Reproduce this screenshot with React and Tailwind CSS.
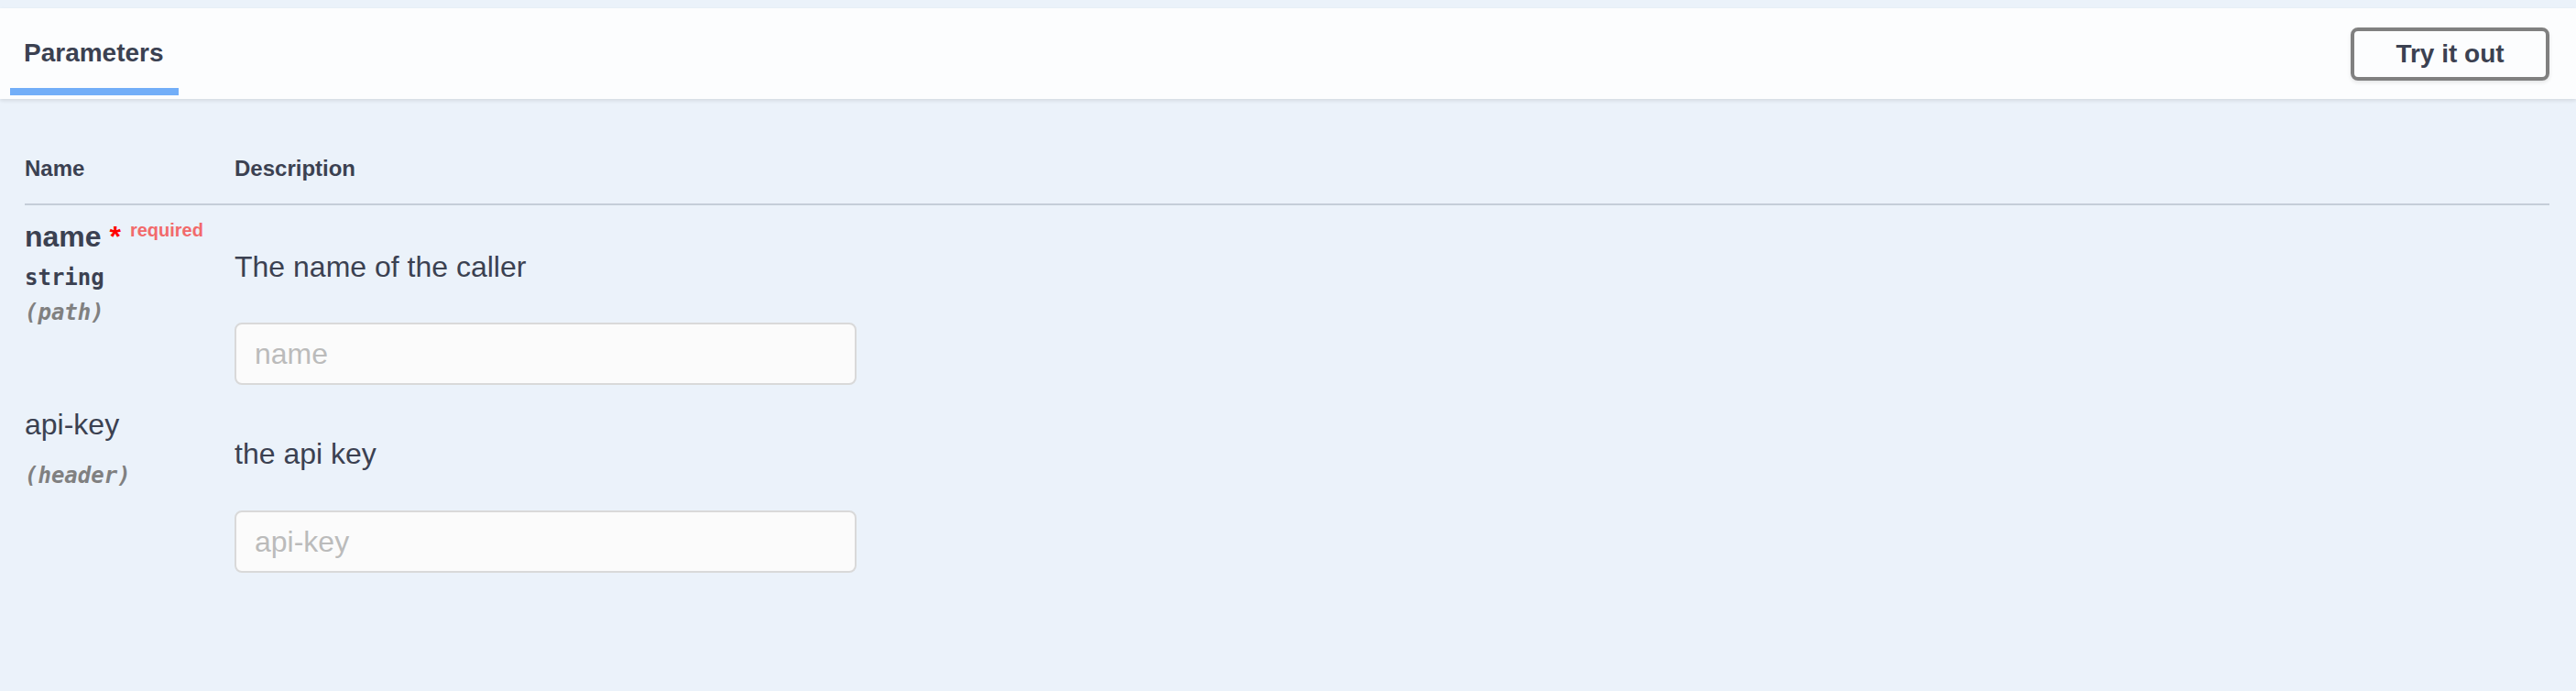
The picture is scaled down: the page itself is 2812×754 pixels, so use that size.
const sans = { fontFamily: '"Liberation Sans", Arial, Helvetica, sans-serif' };

const ParamInput = ({ placeholder }) => (
  <input
    type="text"
    placeholder={placeholder}
    className="block w-[679px] h-[68px] rounded-[8px] border-2 border-[#d9d9d9] bg-[#fbfbfb] pl-[20px] pr-[20px] text-[32px] text-[#3b4151] placeholder:text-[#bbbbbb] outline-none"
    style={sans}
  />
);

const App = () => {
  return (
    <div className="min-h-screen bg-[#ebf2fa] pt-[9px] text-[#3b4151]" style={sans}>
      {/* section header */}
      <div className="flex items-center justify-between bg-[#fcfdfe] pl-[11px] pr-[29px] shadow-[0_2px_4px_rgba(0,0,0,0.1)]">
        <div className="pt-[33px] pb-[4px]">
          <h4 className="pl-[15px] pr-[16px] text-[28px] leading-[32px] font-bold">Parameters</h4>
          <div className="mt-[22px] h-[8px] w-[184px] bg-[#72aef8]"></div>
        </div>
        <button className="flex h-[58px] w-[217px] items-center justify-center rounded-[8px] border-4 border-[#808080] bg-transparent text-[28px] font-bold text-[#3b4151] shadow-[0_2px_4px_rgba(0,0,0,0.1)]">
          Try it out
        </button>
      </div>

      {/* parameters table */}
      <div className="pl-[27px] pr-[29px] pt-[38px]">
        <div className="grid grid-cols-[229px_1fr] border-b-2 border-[#c5cdd8] py-[24px] text-[24px] leading-[28px] font-bold">
          <div>Name</div>
          <div>Description</div>
        </div>

        {/* row: name */}
        <div className="grid grid-cols-[229px_1fr] pb-[9px]">
          <div className="pt-[16px]">
            <div className="text-[32px] leading-[36px] font-bold whitespace-nowrap">
              name<span className="text-[#ff0000]">&nbsp;*</span>
              <span className="pl-[10px] text-[20px] leading-none font-bold text-[#f26a6b] align-[11px]">required</span>
            </div>
            <div
              className="mt-[13px] text-[24px] leading-[28px] font-bold text-[#3b4151]"
              style={{ fontFamily: '"DejaVu Sans Mono", monospace' }}
            >
              string
            </div>
            <div
              className="mt-[10px] text-[24px] leading-[28px] font-bold italic text-[#808080]"
              style={{ fontFamily: '"DejaVu Sans Mono", monospace' }}
            >
              (path)
            </div>
          </div>
          <div className="pt-[49px]">
            <p className="text-[32px] leading-[36px]">The name of the caller</p>
            <div className="mt-[43px]">
              <ParamInput placeholder="name" />
            </div>
          </div>
        </div>

        {/* row: api-key */}
        <div className="grid grid-cols-[229px_1fr]">
          <div className="pt-[16px]">
            <div className="text-[32px] leading-[36px]">api-key</div>
            <div
              className="mt-[24px] text-[24px] leading-[28px] font-bold italic text-[#808080]"
              style={{ fontFamily: '"DejaVu Sans Mono", monospace' }}
            >
              (header)
            </div>
          </div>
          <div className="pt-[48px]">
            <p className="text-[32px] leading-[36px]">the api key</p>
            <div className="mt-[44px]">
              <ParamInput placeholder="api-key" />
            </div>
          </div>
        </div>
      </div>
    </div>
  );
};

export default App;
